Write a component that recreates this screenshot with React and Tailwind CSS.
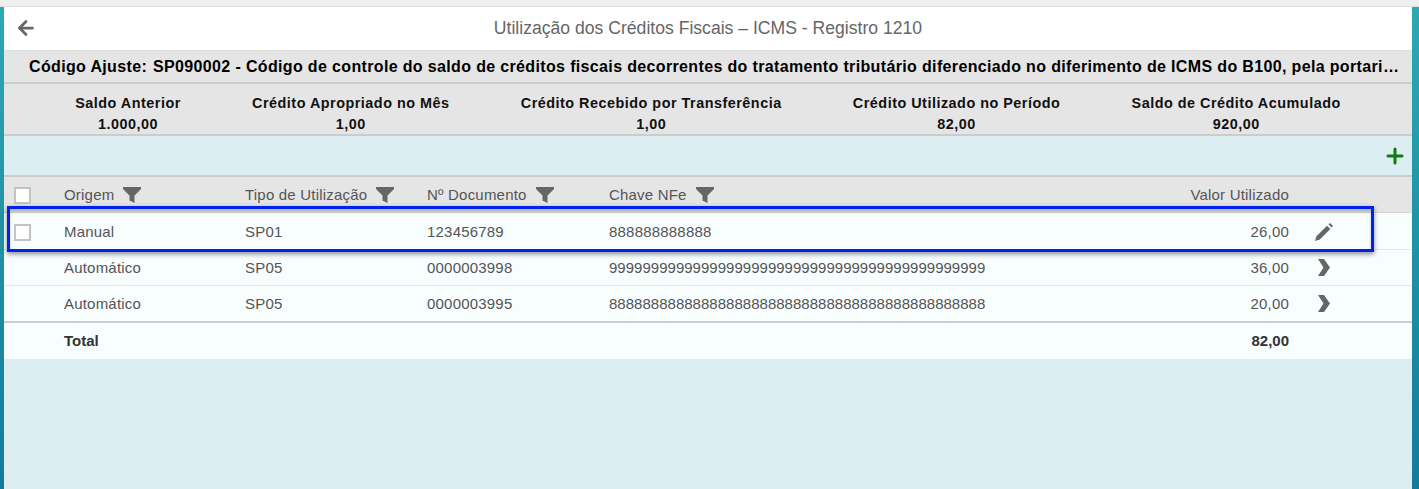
import React from "react";
import { ArrowLeft, Plus } from "lucide-react";

const resumo = [
  ["Saldo Anterior", "1.000,00"],
  ["Crédito Apropriado no Mês", "1,00"],
  ["Crédito Recebido por Transferência", "1,00"],
  ["Crédito Utilizado no Período", "82,00"],
  ["Saldo de Crédito Acumulado", "920,00"],
];

const linhas = [
  ["Automático", "SP05", "0000003998", "9".repeat(45), "36,00"],
  ["Automático", "SP05", "0000003995", "8".repeat(45), "20,00"],
];

const colunas = "grid grid-cols-[60px_181px_182px_182px_1fr_123px] items-center";

const Funil = () => (
  <svg viewBox="0 0 18 16" className="ml-[9px] h-[16px] w-[18px] fill-[#666]">
    <path d="M0 0h18v2l-6.500 6.500V16l-5-2.500V8.500L0 2z" />
  </svg>
);

const Seta = () => (
  <svg viewBox="0 0 12 17" className="h-[17px] w-[12px] fill-[#666]">
    <path d="M0 0h6l6 8.500-6 8.500H0l5.500-8.500z" />
  </svg>
);

const Lapis = () => (
  <svg viewBox="0 0 20 20" className="h-[20px] w-[20px] fill-[#666]">
    <path d="M1 19l1.500-4.800L13 3.700 16.300 7 5.800 17.500z" />
    <path d="M14.500 2.300l1.500-1.300 3 3-1.300 1.500z" />
  </svg>
);

const Check = () => (
  <div className="ml-[10px] h-[17px] w-[17px] border-2 border-[#c4c4c4] bg-white" />
);

export default function App() {
  return (
    <div className="relative h-[489px] w-[1419px] overflow-hidden bg-[#efefef] font-['Liberation_Sans',sans-serif]">
      <div className="h-[7px] border-b border-[#dddddd]" />
      <div className="flex h-[482px]">
        <div className="w-[4px] bg-gradient-to-b from-[#2caab0] to-[#147a9a]" />

        <div className="flex w-[1408px] flex-col bg-[#dceef1]">
          {/* TITULO */}
          <div className="relative flex h-[43px] items-center justify-center bg-white text-[17.6px] text-[#666666]">
            <ArrowLeft className="absolute left-[11px] top-[10px] h-[22px] w-[22px] text-[#666666]" strokeWidth={3} />
            Utilização dos Créditos Fiscais – ICMS - Registro 1210
          </div>

          {/* CODIGO */}
          <div className="flex h-[34px] items-center gap-[6px] whitespace-nowrap border-t border-b-2 border-t-[#dddddd] border-b-[#cccccc] bg-[#e5e5e5] pl-[25px] text-[16px] font-bold tracking-[0.35px] text-black">
            <span className="shrink-0">Código Ajuste:</span>
            <span className="w-[1248px] truncate">
              SP090002 - Código de controle do saldo de créditos fiscais decorrentes do tratamento tributário diferenciado no diferimento de ICMS do B100, pela portaria CAT
            </span>
          </div>

          {/* RESUMO */}
          <div className="flex h-[52px] items-center justify-evenly border-b-2 border-[#cccccc] bg-[#e5e5e5] pt-[9px] text-[14.4px] font-bold tracking-[0.5px] text-[#111111]">
            {resumo.map(([titulo, valor]) => (
              <div key={titulo} className="text-center leading-[21px]">
                <div>{titulo}</div>
                <div>{valor}</div>
              </div>
            ))}
          </div>

          {/* ACOES */}
          <div className="flex h-[39px] items-end justify-end pb-[7px] pr-[5px]">
            <Plus className="h-[24px] w-[24px] text-[#0a7d0a]" strokeWidth={3} />
          </div>

          {/* TABELA */}
          <div className="text-[15px] tracking-[0.2px] text-[#555555]">
            <div className={`${colunas} h-[38px] border-t-2 border-b border-t-[#cccccc] border-b-[#d5d5d5] bg-[#e5e5e5] pt-[1px]`}>
              <Check />
              <div className="flex items-center">Origem<Funil /></div>
              <div className="flex items-center">Tipo de Utilização<Funil /></div>
              <div className="flex items-center">Nº Documento<Funil /></div>
              <div className="flex items-center justify-between">
                <span className="flex items-center">Chave NFe<Funil /></span>
                <span>Valor Utilizado</span>
              </div>
              <div />
            </div>

            <div className={`${colunas} h-[37px] border-b border-[#e4e9eb] bg-[#f8fdfe] pt-[2px]`}>
              <Check />
              <div>Manual</div>
              <div>SP01</div>
              <div>123456789</div>
              <div className="flex justify-between">
                <span>888888888888</span>
                <span>26,00</span>
              </div>
              <div className="pl-[25px]"><Lapis /></div>
            </div>

            {linhas.map((l, i) => (
              <div
                key={l[2]}
                className={`${colunas} bg-[#f8fdfe] pt-[1px] ${i === 0 ? "h-[36px] border-b border-[#e4e9eb]" : "h-[35px]"}`}
              >
                <div />
                <div>{l[0]}</div>
                <div>{l[1]}</div>
                <div>{l[2]}</div>
                <div className="flex justify-between">
                  <span className="tracking-[0.02px]">{l[3]}</span>
                  <span>{l[4]}</span>
                </div>
                <div className="-mt-[2px] pl-[29px]"><Seta /></div>
              </div>
            ))}

            <div className={`${colunas} h-[38px] border-t-2 border-[#cccccc] bg-[#f8fdfe] pt-[1px] font-bold tracking-normal text-[#333333]`}>
              <div />
              <div>Total</div>
              <div />
              <div />
              <div className="text-right">82,00</div>
              <div />
            </div>
          </div>
        </div>

        <div className="w-[7px] bg-gradient-to-b from-[#2caab0] to-[#147a9a]" />
      </div>

      {/* DESTAQUE */}
      <div className="absolute left-[7px] top-[206px] h-[46px] w-[1367px] border-[3px] border-[#0022ee] shadow-[0_2px_5px_rgba(0,0,0,0.45),inset_0_3px_3px_rgba(0,0,0,0.2)]" />
    </div>
  );
}
